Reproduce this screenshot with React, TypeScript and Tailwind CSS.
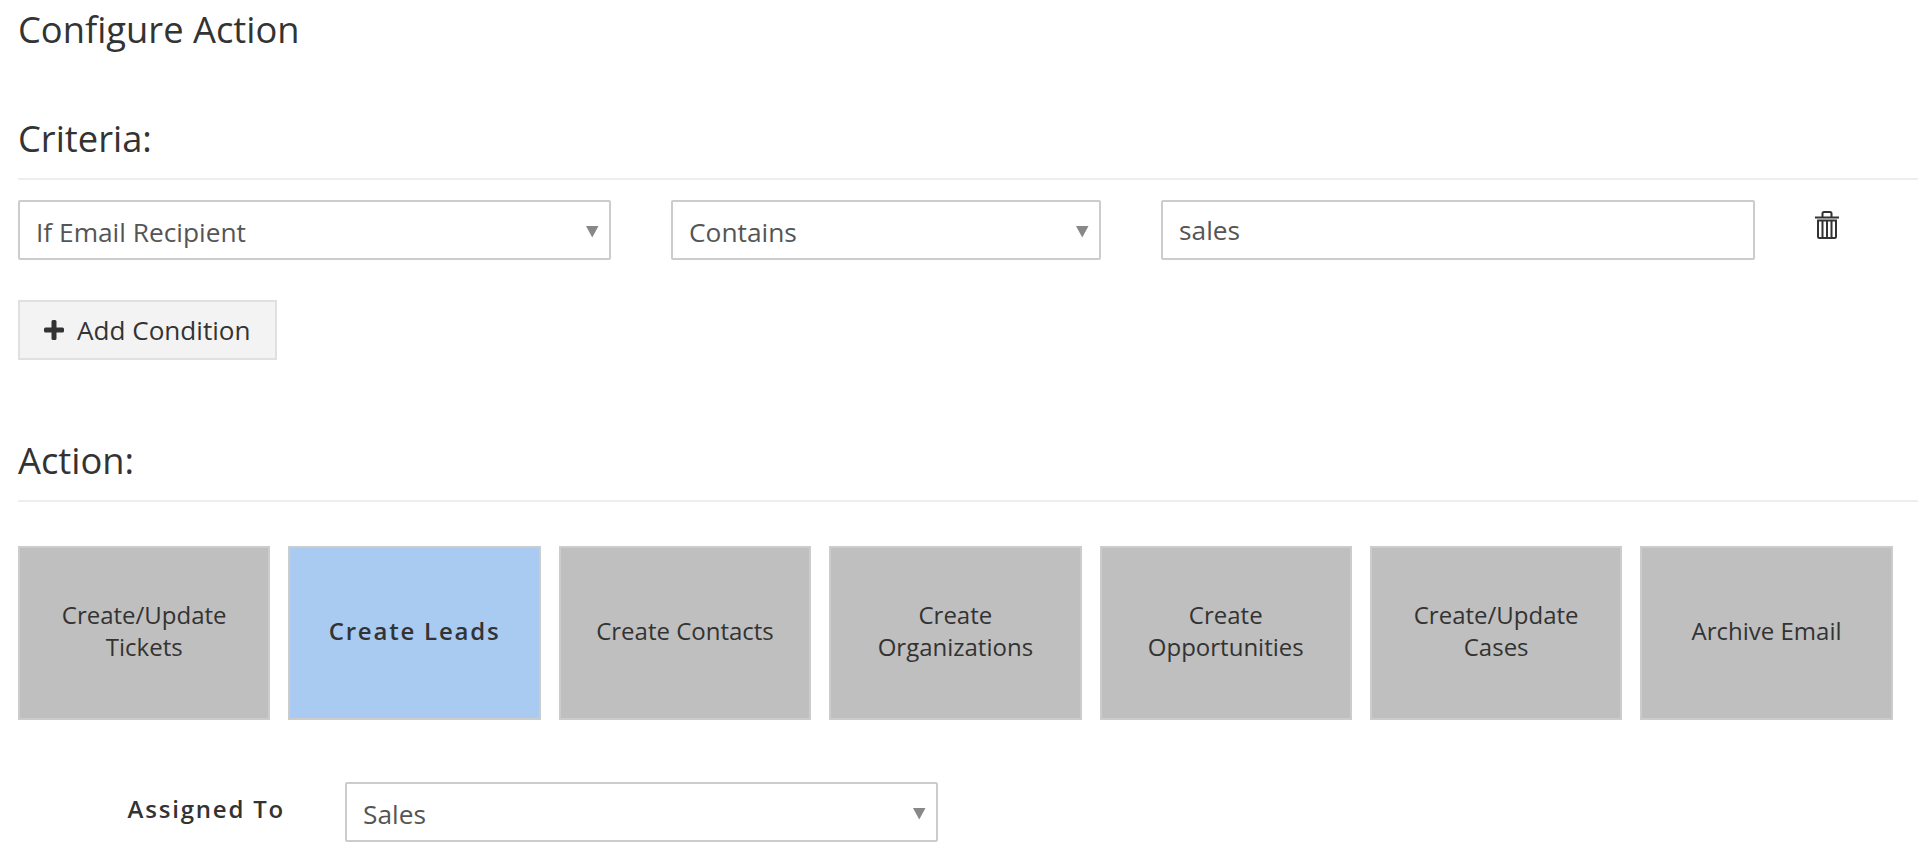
import React from "react";

const Arrow = () => (
  <svg width="13" height="12" viewBox="0 0 13 12" className="absolute right-[10px] top-[24px]" fill="#888888">
    <path d="M0 0H12.5L6.25 11.5Z" />
  </svg>
);

const Select = ({ value, w }: { value: string; w: string }) => (
  <div className={`relative h-[60px] ${w} border-2 border-[#cccccc] rounded-[2px] bg-white px-[16px] pt-[12px] text-[26.3px] leading-[36px] text-[#555555]`}>
    {value}
    <Arrow />
  </div>
);

const Trash = () => (
  <svg width="24" height="28" viewBox="0 0 24 28" fill="none" stroke="#333333">
    <path d="M0 6.5H24" strokeWidth="2" />
    <path d="M7.5 6V2.5Q7.5 1 9 1H15Q16.500 1 16.500 2.500V6" strokeWidth="2" />
    <path d="M3 9.500V25.500Q3 27 4.500 27H19.500Q21 27 21 25.500V9.500Z" strokeWidth="2" />
    <path d="M7.500 10V26M12 10V26M16.500 10V26" strokeWidth="2" />
  </svg>
);

const tiles = [
  ["Create/Update", "Tickets"],
  ["Create Leads"],
  ["Create Contacts"],
  ["Create", "Organizations"],
  ["Create", "Opportunities"],
  ["Create/Update", "Cases"],
  ["Archive Email"],
];

export default function App() {
  return (
    <div className="h-[854px] overflow-hidden bg-white pl-[18px] pr-[8px] text-[#333333] [font-family:'Open_Sans',sans-serif]">
      <h3 className="pt-[5px] text-[36.3px] leading-[48px] font-normal">Configure Action</h3>

      <h4 className="mt-[61px] text-[36.3px] leading-[48px] font-normal">Criteria:</h4>
      <div className="mt-[16px] h-[2px] bg-[#eeeeee]" />

      <div className="mt-[20px] flex items-start">
        <Select value="If Email Recipient" w="w-[593px]" />
        <div className="ml-[60px]"><Select value="Contains" w="w-[430px]" /></div>
        <div className="ml-[60px] h-[60px] w-[594px] border-2 border-[#cccccc] rounded-[2px] bg-white px-[16px] pt-[10px] text-[26.3px] leading-[36px] text-[#555555]">sales</div>
        <div className="ml-[60px] mt-[11px]"><Trash /></div>
      </div>

      <button className="mt-[40px] flex h-[60px] w-[259px] items-center border-2 border-[#e0e0e0] bg-[#f3f3f3] pl-[24px] pt-[2px] text-[26.1px] text-[#333333]">
        <svg width="20" height="20" viewBox="0 0 20 20" fill="#333333" className="mr-[13px] -mt-[2px]">
          <path d="M7.500 1.500Q7.500 0 9 0H11Q12.500 0 12.500 1.500V7.500H18.500Q20 7.500 20 9V11Q20 12.500 18.500 12.500H12.500V18.500Q12.500 20 11 20H9Q7.500 20 7.500 18.500V12.500H1.500Q0 12.500 0 11V9Q0 7.500 1.500 7.500H7.500Z" />
        </svg>
        Add Condition
      </button>

      <h4 className="mt-[76px] text-[36.3px] leading-[48px] font-normal">Action:</h4>
      <div className="mt-[16px] h-[2px] bg-[#eeeeee]" />

      <div className="mt-[44px] flex gap-[18px]">
        {tiles.map((t, i) => {
          const active = t[0] === "Create Leads";
          return (
            <div
              key={i}
              className={`flex h-[174px] w-[252.4px] flex-col items-center justify-center border-2 border-[#cccccc] pb-[4px] text-center text-[24px] leading-[32px] ${
                active ? "bg-[#a9cbf2] font-semibold tracking-[1.8px]" : "bg-[#bfbfbf]"
              }`}
            >
              {t.map((line) => (
                <span key={line}>{line}</span>
              ))}
            </div>
          );
        })}
      </div>

      <div className="mt-[62px] flex items-start">
        <div className="w-[267px] pt-[9px] text-right text-[24px] leading-[36px] font-semibold tracking-[1.8px]">Assigned To</div>
        <div className="ml-[60px]"><Select value="Sales" w="w-[593px]" /></div>
      </div>
    </div>
  );
}
